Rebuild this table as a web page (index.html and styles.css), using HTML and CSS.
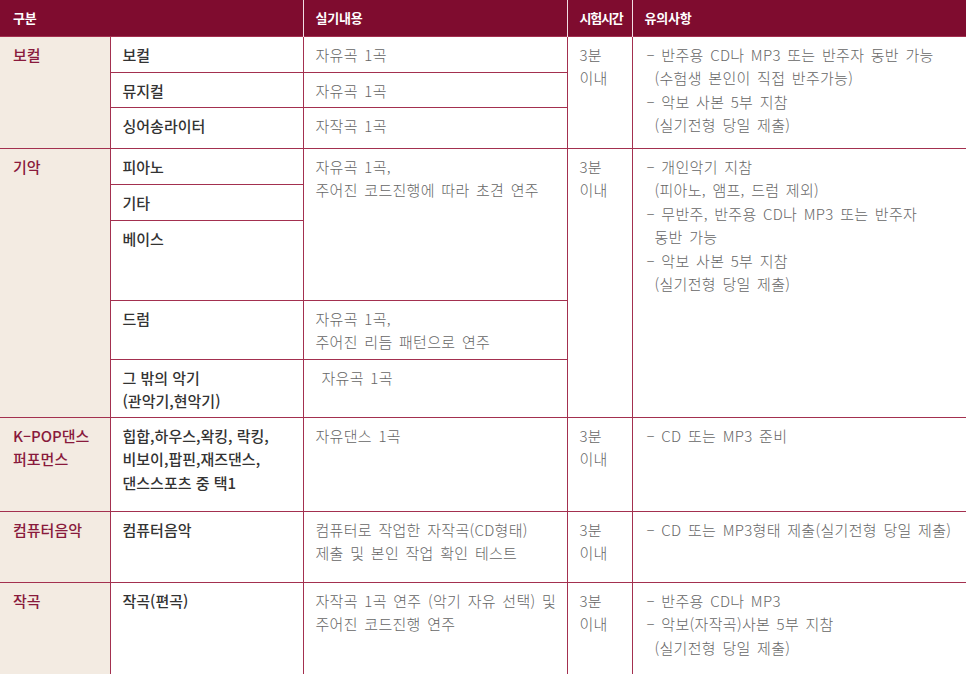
FILE: index.html
```html
<!DOCTYPE html>
<html lang="ko">
<head>
<meta charset="utf-8">
<title>실기전형 안내</title>
<link rel="stylesheet" href="styles.css">
</head>
<body>
<table class="exam">
  <colgroup>
    <col class="c1"><col class="c2"><col class="c3"><col class="c4"><col class="c5">
  </colgroup>
  <thead>
    <tr class="head">
      <th colspan="2" class="th-first">구분</th>
      <th>실기내용</th>
      <th class="th-time">시험시간</th>
      <th>유의사항</th>
    </tr>
  </thead>
  <tbody>
    <tr class="h36">
      <td rowspan="3" class="cat">보컬</td>
      <td class="sub">보컬</td>
      <td class="txt">자유곡 1곡</td>
      <td rowspan="3" class="txt">3분<br>이내</td>
      <td rowspan="3" class="txt notes">
        <div>– 반주용 CD나 MP3 또는 반주자 동반 가능</div>
        <div class="cont">(수험생 본인이 직접 반주가능)</div>
        <div>– 악보 사본 5부 지참</div>
        <div class="cont">(실기전형 당일 제출)</div>
      </td>
    </tr>
    <tr class="h35">
      <td class="sub">뮤지컬</td>
      <td class="txt">자유곡 1곡</td>
    </tr>
    <tr class="h41">
      <td class="sub">싱어송라이터</td>
      <td class="txt">자작곡 1곡</td>
    </tr>

    <tr class="h36">
      <td rowspan="5" class="cat">기악</td>
      <td class="sub">피아노</td>
      <td rowspan="3" class="txt">자유곡 1곡,<br>주어진 코드진행에 따라 초견 연주</td>
      <td rowspan="5" class="txt">3분<br>이내</td>
      <td rowspan="5" class="txt notes">
        <div>– 개인악기 지참</div>
        <div class="cont">(피아노, 앰프, 드럼 제외)</div>
        <div>– 무반주, 반주용 CD나 MP3 또는 반주자</div>
        <div class="cont">동반 가능</div>
        <div>– 악보 사본 5부 지참</div>
        <div class="cont">(실기전형 당일 제출)</div>
      </td>
    </tr>
    <tr class="h36">
      <td class="sub">기타</td>
    </tr>
    <tr class="h80">
      <td class="sub">베이스</td>
    </tr>
    <tr class="h59">
      <td class="sub">드럼</td>
      <td class="txt">자유곡 1곡,<br>주어진 리듬 패턴으로 연주</td>
    </tr>
    <tr class="h58">
      <td class="sub">그 밖의 악기<br>(관악기,현악기)</td>
      <td class="txt indent">자유곡 1곡</td>
    </tr>

    <tr class="h94">
      <td class="cat">K–POP댄스<br>퍼포먼스</td>
      <td class="sub">힙합,하우스,왁킹, 락킹,<br>비보이,팝핀,재즈댄스,<br>댄스스포츠 중 택1</td>
      <td class="txt">자유댄스 1곡</td>
      <td class="txt">3분<br>이내</td>
      <td class="txt notes"><div>– CD 또는 MP3 준비</div></td>
    </tr>

    <tr class="h71">
      <td class="cat">컴퓨터음악</td>
      <td class="sub">컴퓨터음악</td>
      <td class="txt">컴퓨터로 작업한 자작곡(CD형태)<br>제출 및 본인 작업 확인 테스트</td>
      <td class="txt">3분<br>이내</td>
      <td class="txt notes"><div>– CD 또는 MP3형태 제출(실기전형 당일 제출)</div></td>
    </tr>

    <tr class="h92">
      <td class="cat">작곡</td>
      <td class="sub">작곡(편곡)</td>
      <td class="txt">자작곡 1곡 연주 (악기 자유 선택) 및<br>주어진 코드진행 연주</td>
      <td class="txt">3분<br>이내</td>
      <td class="txt notes">
        <div>– 반주용 CD나 MP3</div>
        <div>– 악보(자작곡)사본 5부 지참</div>
        <div class="cont">(실기전형 당일 제출)</div>
      </td>
    </tr>
  </tbody>
</table>
</body>
</html>
```

FILE: styles.css
```css
html, body {
  margin: 0;
  padding: 0;
  background: #ffffff;
}

body {
  font-family: "Noto Sans CJK KR", "Noto Sans", sans-serif;
}

.exam {
  width: 966px;
  table-layout: fixed;
  border-collapse: collapse;
  border-spacing: 0;
  border-right: 1px solid #d8b5c0;
}

.c1 { width: 110px; }
.c2 { width: 193px; }
.c3 { width: 264px; }
.c4 { width: 65px; }
.c5 { width: 334px; }

.head {
  height: 36px;
}

.head th {
  background: #7f0c2f;
  color: #ffffff;
  font-size: 13px;
  font-weight: 700;
  text-align: left;
  vertical-align: middle;
  padding: 0 12px;
  letter-spacing: -0.2px;
  white-space: nowrap;
  border-left: 1px solid #f2dde3;
  border-bottom: none;
}

.head .th-first {
  border-left: none;
  padding-left: 13px;
}

.head .th-time {
  letter-spacing: -1.2px;
  padding-right: 0;
}

.exam td {
  vertical-align: top;
  text-align: left;
  padding: 6px 12px 0 12px;
  line-height: 23.5px;
  border: 1px solid #a3304f;
}

.exam td:first-child {
  border-left: none;
}

.cat {
  background: #f3ebe2;
  color: #891a3c;
  font-size: 15px;
  font-weight: 500;
  padding-left: 13px !important;
}

.sub {
  color: #333333;
  font-size: 15px;
  font-weight: 500;
}

.txt {
  color: #666666;
  font-size: 15px;
  font-weight: 300;
  word-spacing: 2px;
  letter-spacing: 0.3px;
  white-space: nowrap;
}

.notes {
  padding-left: 14px !important;
  padding-right: 2px !important;
}

.cont {
  padding-left: 8px;
}

.indent {
  padding-left: 18px !important;
}

.h35 { height: 35px; }
.h36 { height: 36px; }
.h41 { height: 41px; }
.h58 { height: 58px; }
.h59 { height: 59px; }
.h71 { height: 71px; }
.h80 { height: 80px; }
.h92 { height: 92px; }
.h94 { height: 94px; }
```
